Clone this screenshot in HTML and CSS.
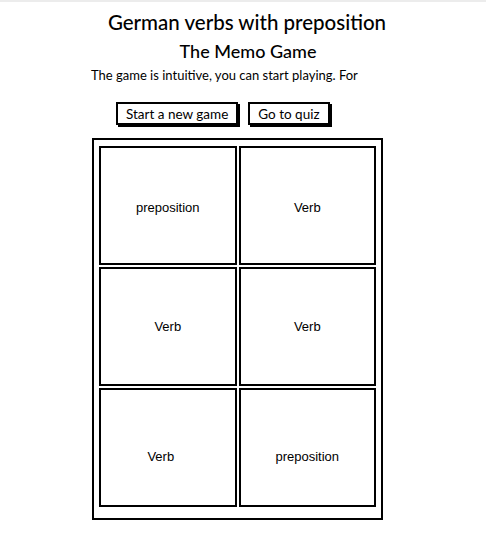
FILE: index.html
```html
<!DOCTYPE html>
<html lang="en">

<head>
    <meta charset="UTF-8">
    <meta name="viewport" content="width=device-width, initial-scale=1.0">
    <title>The Memo Game</title>
    <link rel="stylesheet" href="styles.css">
</head>

<body>
    <div class="page">
        <h1 class="title">German verbs with preposition</h1>
        <h2 class="subtitle">The Memo Game</h2>
        <p class="intro">The game is intuitive, you can start playing. For</p>

        <div class="actions">
            <button class="sketch-btn">Start a new game</button>
            <button class="sketch-btn">Go to quiz</button>
        </div>

        <!-- game board -->
        <div class="board">
            <div class="card card-top">preposition</div>
            <div class="card card-top">Verb</div>
            <div class="card">Verb</div>
            <div class="card">Verb</div>
            <div class="card card-low card-left">Verb</div>
            <div class="card card-low">preposition</div>
        </div>
    </div>
</body>

</html>
```

FILE: styles.css
```css
html,
body,
h1,
h2,
p,
div {
    margin: 0;
    padding: 0;
}

body {
    border-top: 2px solid #ececec;
    background: #fff;
    color: #000;
    font-family: "Lato", "Noto Sans", sans-serif;
}

.page {
    width: 304px;
    margin: 0 auto;
    padding-top: 8px;
}

.title {
    text-align: center;
    font-size: 20.5px;
    font-weight: 500;
    line-height: 24px;
    margin-left: 8px;
}

.subtitle {
    text-align: center;
    font-size: 18px;
    font-weight: 500;
    line-height: 22px;
    margin-top: 6px;
    margin-left: 10px;
}

.intro {
    font-size: 13px;
    line-height: 16px;
    margin-top: 5px;
}

.actions {
    display: flex;
    gap: 10px;
    margin: 19px 0 0 25px;
}

.sketch-btn {
    font-family: "Lato", "Noto Sans", sans-serif;
    font-size: 13.5px;
    color: #000;
    background: #fff;
    border: 2px solid #000;
    box-shadow: 2px 2px 0 #000;
    padding: 2px 8px;
    height: 23px;
    line-height: 16px;
}

.board {
    display: grid;
    grid-template-columns: 1fr 1fr;
    grid-auto-rows: 119px;
    gap: 2px;
    width: 291px;
    margin: 13px 0 0 1px;
    padding: 6px 5px 11px 5px;
    box-sizing: border-box;
    border: 2px solid #000;
}

.card {
    display: flex;
    align-items: center;
    justify-content: center;
    border: 2px solid #000;
    font-family: "Liberation Sans", Arial, sans-serif;
    font-size: 13px;
    background: #fff;
}

.card-top {
    padding-top: 4px;
}

.card-low {
    padding-top: 18px;
}

.card-left {
    padding-right: 14px;
}
```
